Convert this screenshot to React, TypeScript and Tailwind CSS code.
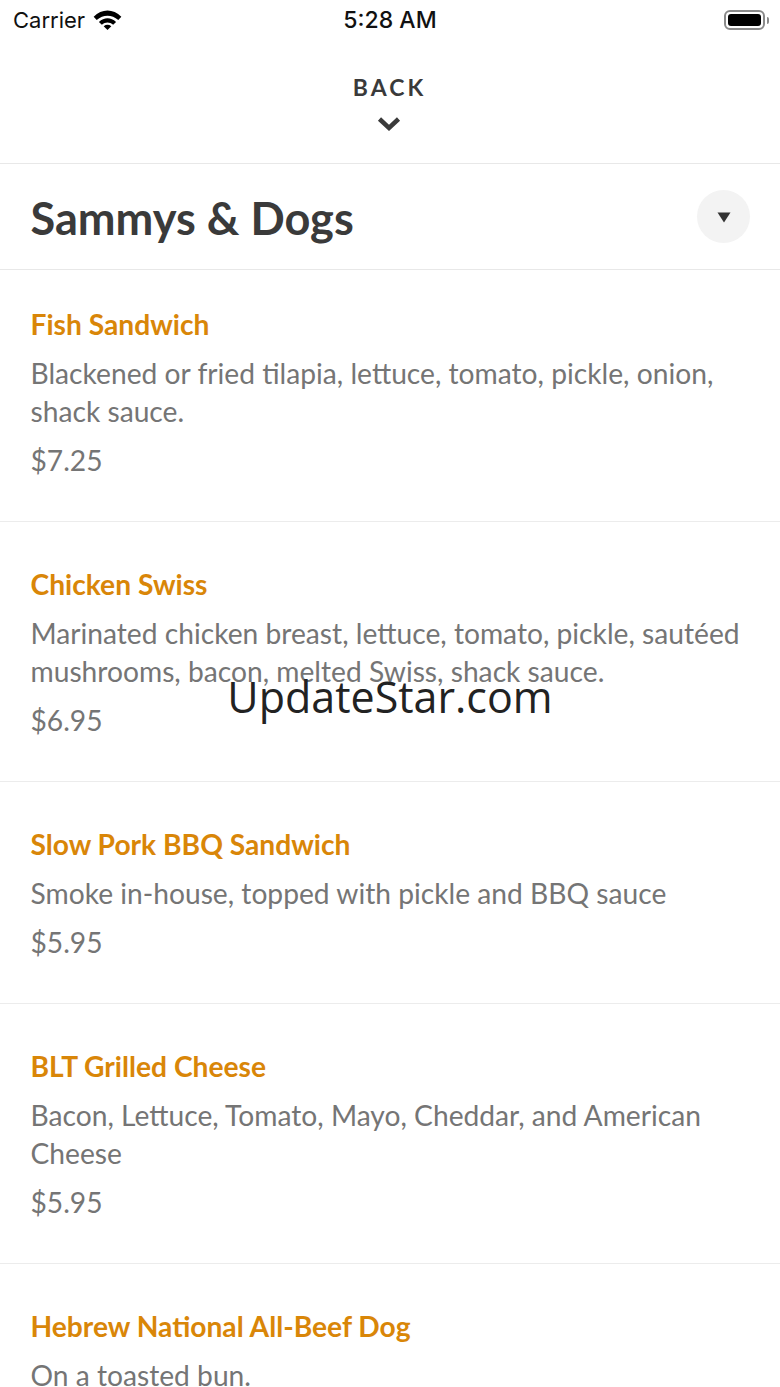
function Item({ title, lines, price, h, pt }: { title: string; lines: string[]; price?: string; h: string; pt: string }) {
  return (
    <div className={`${h} ${pt} border-b border-[#ececec] pl-[30.5px] pr-[30px]`}>
      <div className="text-[28.2px] leading-[34px] font-bold text-[#d98608]">{title}</div>
      <div className="mt-[13px] text-[28.2px] leading-[38px] text-[#757575]">
        {lines.map((l) => (
          <div key={l}>{l}</div>
        ))}
      </div>
      {price && <div className="mt-[10.6px] text-[28.2px] leading-[38px] text-[#757575]">{price}</div>}
    </div>
  );
}

export default function App() {
  return (
    <div className="relative h-[1387px] w-[780px] overflow-hidden bg-white font-['Lato','Noto_Sans',sans-serif]">
      <div className="relative flex h-[40px] items-center justify-between pl-[13px] pr-[11px] font-['Inter',sans-serif] text-[22px] text-[#111]">
        <div className="flex items-center gap-[8px]">
          <span>Carrier</span>
          <svg className="-translate-y-[1px]" width="29" height="21" viewBox="0 0 30 22">
            <path d="M0.5 8C9 -0.5 21 -0.5 29.5 8L26.3 11.5C19.5 5.5 10.5 5.5 3.7 11.5Z" fill="#000" />
            <path d="M6 13.5C11.5 8.5 18.5 8.5 24 13.5L20.9 16.6C17.3 13.3 12.7 13.3 9.1 16.6Z" fill="#000" />
            <path d="M11 18C13.5 16 16.5 16 19 18L15 22Z" fill="#000" />
          </svg>
        </div>
        <span className="absolute left-0 right-0 text-center text-[23px] font-medium">5:28 AM</span>
        <div className="flex items-center gap-[2px]">
          <div className="h-[20px] w-[41px] rounded-[6px] border-2 border-[#8a8a8a] p-[2px]">
            <div className="h-full w-full rounded-[3px] bg-black" />
          </div>
          <div className="h-[7px] w-[2px] rounded-r-sm bg-[#8a8a8a]" />
        </div>
      </div>

      <div className="flex h-[124px] flex-col items-center border-b border-[#e8e8e8] pt-[32px]">
        <div className="-translate-x-[0.5px] text-[23px] leading-[30px] font-bold tracking-[3px] text-[#3a3a3a]">BACK</div>
        <svg className="mt-[14px] -translate-x-[1px]" width="24" height="16" viewBox="0 0 24 16">
          <path d="M2.5 3L12 12L21.5 3" fill="none" stroke="#3a3a3a" strokeWidth="4.5" />
        </svg>
      </div>

      <div className="flex h-[106px] items-center justify-between border-b border-[#e8e8e8] pl-[30.5px] pr-[30px]">
        <div className="translate-y-[1px] text-[45.1px] leading-[54px] font-bold text-[#3a3a3a]">Sammys &amp; Dogs</div>
        <div className="flex h-[53px] w-[53px] items-center justify-center rounded-full bg-[#f3f3f3]">
          <svg className="translate-y-[1px]" width="14" height="11" viewBox="0 0 14 11">
            <path d="M0.5 0.5H13.5L7 10.5Z" fill="#333" />
          </svg>
        </div>
      </div>

      <Item
        h="h-[252px]"
        pt="pt-[37px]"
        title="Fish Sandwich"
        lines={["Blackened or fried tilapia, lettuce, tomato, pickle, onion,", "shack sauce."]}
        price="$7.25"
      />
      <Item
        h="h-[260px]"
        pt="pt-[45px]"
        title="Chicken Swiss"
        lines={["Marinated chicken breast, lettuce, tomato, pickle, sautéed", "mushrooms, bacon, melted Swiss, shack sauce."]}
        price="$6.95"
      />
      <Item
        h="h-[222px]"
        pt="pt-[45px]"
        title="Slow Pork BBQ Sandwich"
        lines={["Smoke in-house, topped with pickle and BBQ sauce"]}
        price="$5.95"
      />
      <Item
        h="h-[260px]"
        pt="pt-[45px]"
        title="BLT Grilled Cheese"
        lines={["Bacon, Lettuce, Tomato, Mayo, Cheddar, and American", "Cheese"]}
        price="$5.95"
      />
      <Item h="h-[130px]" pt="pt-[45px]" title="Hebrew National All-Beef Dog" lines={["On a toasted bun."]} />

      <div className="absolute left-0 right-0 top-[669px] text-center font-['Open_Sans',sans-serif] text-[43px] leading-[56px] text-[#222]">
        UpdateStar.com
      </div>
    </div>
  );
}
